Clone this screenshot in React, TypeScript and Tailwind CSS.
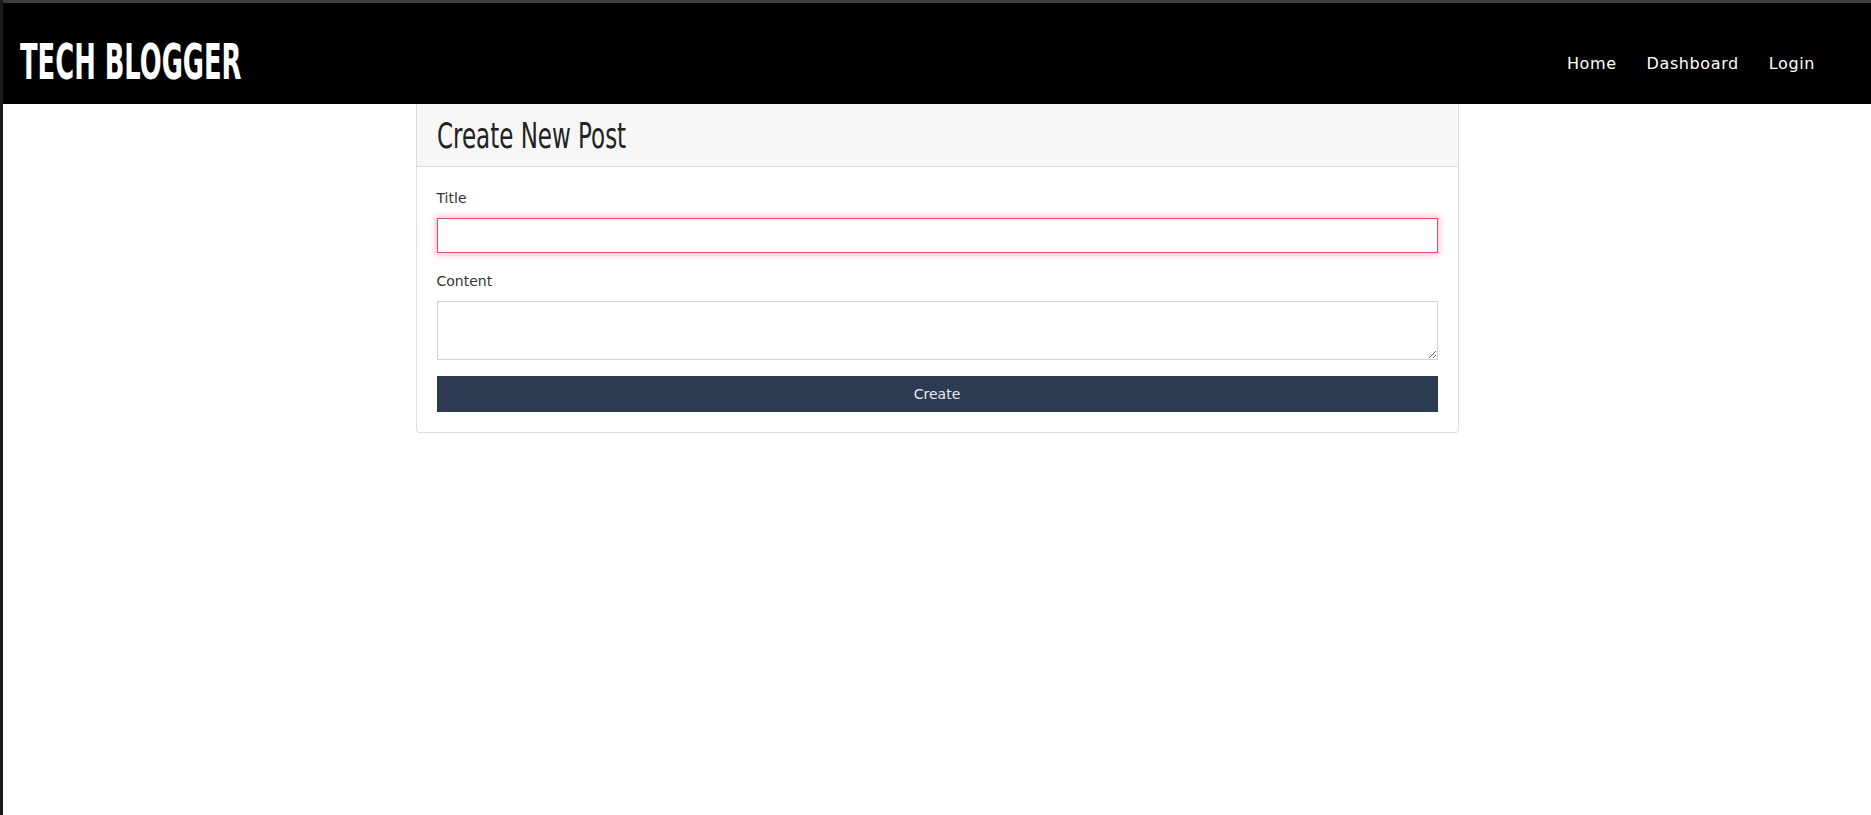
import React from 'react';

const navLinks = ['Home', 'Dashboard', 'Login'];

const condensed = { fontFamily: '"DejaVu Sans Condensed", "Liberation Sans Narrow", sans-serif' };

const App = () => {
  return (
    <div className="flex min-h-[815px] w-full bg-[#1c1a16]">
      <div className="w-[3px] shrink-0" />
      <div className="flex min-w-0 flex-1 flex-col bg-white">
        <div className="h-[3px] bg-[#3c3c3c]" />
        <header className="flex h-[101px] items-center justify-between bg-black pl-[17px] pr-[56px]">
          <h1
            className="mt-[18px] origin-left scale-x-[0.585] whitespace-nowrap text-[49px] font-bold leading-none text-white"
            style={condensed}
          >
            TECH BLOGGER
          </h1>
          <nav
            className="mt-[20px] flex gap-[30px] text-[16px] text-white"
            style={{ fontFamily: '"DejaVu Sans", sans-serif' }}
          >
            {navLinks.map((link) => (
              <a key={link} href="#" className="tracking-[0.6px]">
                {link}
              </a>
            ))}
          </nav>
        </header>

        <main className="flex justify-center">
          <div className="w-[1043px] rounded-b-[4px] border border-t-0 border-[#dcdcdc]">
            <div className="flex h-[63px] items-center border-b border-[#dcdcdc] bg-[#f7f7f7] px-[20px]">
              <h2
                className="mt-[2px] origin-left scale-x-[0.71] whitespace-nowrap text-[36px] leading-none text-[#222]"
                style={condensed}
              >
                Create New Post
              </h2>
            </div>
            <form
              className="flex flex-col px-[20px] pt-[20px] pb-[20px] text-[14px] text-[#333]"
              style={{ fontFamily: '"DejaVu Sans", sans-serif' }}
            >
              <label className="mb-[9px] block leading-[22px]">Title</label>
              <input
                type="text"
                className="h-[35px] w-full border border-[#ea4a6b] px-2 shadow-[0_0_6px_2px_rgba(255,90,120,0.35)] outline-none"
              />
              <label className="mt-[17px] mb-[9px] block leading-[22px]">Content</label>
              <textarea className="h-[59px] w-full border border-[#cfd4dc] px-2 outline-none" />
              <button
                type="button"
                className="mt-[16px] h-[36px] w-full bg-[#2d3b52] text-[14px] text-[#e8eaee]"
              >
                Create
              </button>
            </form>
          </div>
        </main>
      </div>
    </div>
  );
};

export default App;
